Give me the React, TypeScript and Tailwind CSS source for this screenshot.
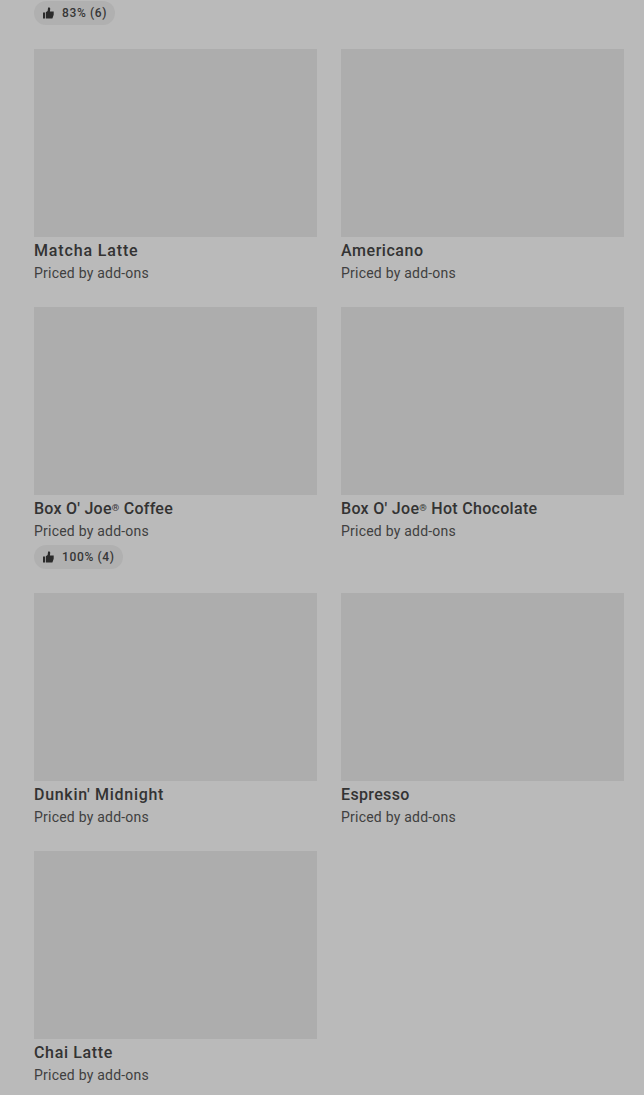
type Item = { name: string; rating?: string; tracking: string };

const items: Item[] = [
  { name: "Matcha Latte", tracking: "tracking-[0.85px]" },
  { name: "Americano", tracking: "tracking-[0.55px]" },
  { name: "Box O' Joe® Coffee", rating: "100% (4)", tracking: "tracking-[0.25px]" },
  { name: "Box O' Joe® Hot Chocolate", tracking: "tracking-[0.3px]" },
  { name: "Dunkin' Midnight", tracking: "tracking-[0.7px]" },
  { name: "Espresso", tracking: "tracking-[0.35px]" },
  { name: "Chai Latte", tracking: "tracking-[0.65px]" },
];

function ThumbIcon() {
  return (
    <svg width="12" height="12" viewBox="0 0 12 12" fill="#2b2b2b" className="shrink-0">
      <path d="M1 5.5h2v6H1z" />
      <path d="M3.8 5.2 5.6 3.9 6.1 0.6h.9c.9 0 1.3.6 1.2 1.4L7.9 4.4h3.8v3.3l-1.3 3.8H3.8z" />
    </svg>
  );
}

function Rating({ text }: { text: string }) {
  return (
    <div className="flex h-6 w-fit items-center gap-2 rounded-full bg-[#b0b0b0] px-2 text-[12px] font-medium leading-6 tracking-[0.65px] text-[#363636]">
      <ThumbIcon />
      <span>{text}</span>
    </div>
  );
}

function Title({ name }: { name: string }) {
  const [before, after] = name.split("®");
  if (after === undefined) return <>{name}</>;
  return (
    <>
      {before}
      <span className="align-[3px] text-[9.5px] leading-none">®</span>
      {after}
    </>
  );
}

function Card({ item }: { item: Item }) {
  return (
    <article>
      <div className="h-[188px] bg-[#adadad]" />
      <h3 className={`mt-0.5 h-6 whitespace-nowrap text-[16px] font-medium leading-6 text-[#333333] ${item.tracking}`}>
        <Title name={item.name} />
      </h3>
      <p className="h-5 text-[14px] leading-5 tracking-[0.22px] text-[#404040]">Priced by add-ons</p>
      {item.rating && (
        <div className="mt-1">
          <Rating text={item.rating} />
        </div>
      )}
    </article>
  );
}

export default function App() {
  return (
    <main className="h-[1095px] overflow-hidden bg-[#bababa] pl-[34px] pr-5 pt-px font-[Roboto,sans-serif]">
      <Rating text="83% (6)" />
      <div className="mt-6 grid grid-cols-2 gap-6">
        {items.map((item) => (
          <Card key={item.name} item={item} />
        ))}
      </div>
    </main>
  );
}
